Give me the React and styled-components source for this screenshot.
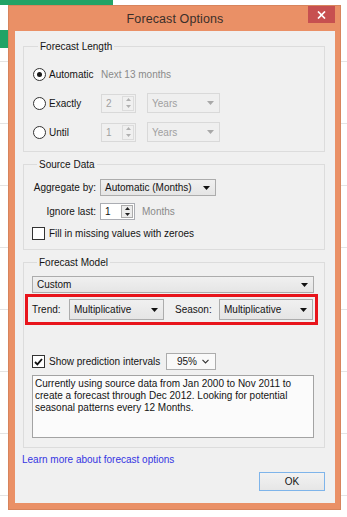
import React from 'react';
import styled, { createGlobalStyle } from 'styled-components';

const FONT = `"Liberation Sans", Arial, sans-serif`;

const Global = createGlobalStyle`
  html, body { margin: 0; padding: 0; }
  body {
    background: #fff;
    font-family: ${FONT};
    font-size: 10px;
    color: #141414;
    width: 347px;
    height: 517px;
    overflow: hidden;
  }
`;

const Desktop = styled.div`
  width: 347px;
  height: 517px;
  box-sizing: border-box;
  padding: 5px 6px 7px 8px;
  background-color: #fff;
  background-image:
    linear-gradient(#21a366, #21a366),
    linear-gradient(#21a366, #21a366),
    repeating-linear-gradient(to bottom, transparent 0 61px, #e4e4e4 61px 62px);
  background-size: 113px 5px, 8px 18px, 100% 100%;
  background-position: 0 0, 0 30px, 0 0;
  background-repeat: no-repeat;
`;

const Window = styled.div`
  width: 333px;
  height: 505px;
  box-sizing: border-box;
  background: #ea9066;
  border: 1px solid #d7845c;
  padding: 0 5px 6px 6px;
  display: flex;
  flex-direction: column;
`;

const TitleBar = styled.div`
  height: 25px;
  display: grid;
  grid-template-columns: 1fr auto 1fr;
  align-items: center;
`;

const Title = styled.div`
  grid-column: 2;
  font-size: 12.5px;
  color: #3a2f2a;
  letter-spacing: 0.1px;
`;

const CloseButton = styled.div`
  grid-column: 3;
  justify-self: end;
  align-self: start;
  width: 27px;
  height: 17px;
  background: #c75050;
  display: flex;
  align-items: center;
  justify-content: center;
`;

const Client = styled.div`
  flex: 1;
  background: #f0f0f0;
  padding: 9px 10px 12px 8px;
  display: flex;
  flex-direction: column;
`;

const Group = styled.fieldset`
  margin: 0 0 ${p => p.$mb || 0}px 0;
  border: 1px solid #dcdcdc;
  padding: ${p => p.$pad};
  min-width: 0;
`;

const Legend = styled.legend`
  padding: 0 2px;
  margin-left: 5px;
  line-height: 13px;
  font-size: 10px;
  color: #141414;
`;

const LengthGrid = styled.div`
  display: grid;
  grid-template-columns: 57px 35px 73px;
  grid-auto-rows: 20px;
  column-gap: 11px;
  row-gap: 9px;
  align-items: center;
`;

const RadioLabel = styled.label`
  display: flex;
  align-items: center;
  gap: 3px;
  white-space: nowrap;
`;

const RadioCircle = styled.span`
  flex: none;
  width: 13px;
  height: 13px;
  box-sizing: border-box;
  border-radius: 50%;
  border: 1px solid #333;
  background: #fff;
  display: flex;
  align-items: center;
  justify-content: center;
  &::after {
    content: '';
    width: 5px;
    height: 5px;
    border-radius: 50%;
    background: ${p => (p.$checked ? '#1a1a1a' : 'transparent')};
  }
`;

const Hint = styled.span`
  grid-column: ${p => p.$span || 'auto'};
  color: #8a8a8a;
`;

const SpinBox = styled.div`
  height: ${p => p.$h}px;
  width: 35px;
  box-sizing: border-box;
  border: 1px solid ${p => (p.$disabled ? '#d9d9d9' : '#abadb3')};
  background: ${p => (p.$disabled ? '#f0f0f0' : '#fff')};
  color: ${p => (p.$disabled ? '#a0a0a0' : '#141414')};
  display: flex;
  align-items: center;
  justify-content: space-between;
  padding: 1px 1px 1px 4px;
`;

const SpinButtons = styled.div`
  width: 12px;
  height: 100%;
  box-sizing: border-box;
  border: 1px solid ${p => (p.$disabled ? '#dcdcdc' : '#acacac')};
  background: ${p => (p.$disabled ? '#f0f0f0' : '#ececec')};
  display: grid;
  grid-template-rows: 1fr 1fr;
  justify-items: center;
  align-items: center;
`;

const Combo = styled.div`
  width: ${p => p.$w ? `${p.$w}px` : 'auto'};
  height: ${p => p.$h}px;
  box-sizing: border-box;
  border: 1px solid ${p => (p.$disabled ? '#d9d9d9' : '#acacac')};
  background: ${p =>
    p.$disabled ? '#efefef' : p.$light ? '#f9f9f9' : 'linear-gradient(#f0f0f0, #e5e5e5)'};
  color: ${p => (p.$disabled ? '#a0a0a0' : '#141414')};
  display: flex;
  align-items: center;
  justify-content: space-between;
  padding: 0 ${p => (p.$light ? 6 : 5)}px 0 ${p => (p.$light ? 10 : 4)}px;
`;

const SourceGrid = styled.div`
  display: grid;
  grid-template-columns: 64px auto;
  grid-template-rows: 17px 17px 13px;
  column-gap: 4px;
  row-gap: 7px;
  align-items: center;
  justify-items: start;
`;

const FieldLabel = styled.span`
  justify-self: end;
  white-space: nowrap;
`;

const Inline = styled.div`
  display: flex;
  align-items: center;
  gap: ${p => p.$gap || 0}px;
`;

const CheckLabel = styled.label`
  grid-column: ${p => p.$span || 'auto'};
  display: flex;
  align-items: center;
  gap: 4px;
  white-space: nowrap;
`;

const CheckBox = styled.span`
  flex: none;
  width: 13px;
  height: 13px;
  box-sizing: border-box;
  border: 1px solid #333;
  background: #fff;
  display: flex;
  align-items: center;
  justify-content: center;
`;

const ModelBody = styled.div`
  display: flex;
  flex-direction: column;
`;

const Highlight = styled.div`
  margin: 1px -4px 0 -7px;
  border: 3px solid #e8141b;
  padding: 2px 2px 2px 4px;
  display: flex;
  align-items: center;
`;

const InlineLabel = styled.span`
  width: ${p => p.$w}px;
  margin-left: ${p => p.$ml || 0}px;
  white-space: nowrap;
`;

const IntervalRow = styled.div`
  margin-top: 28px;
  display: grid;
  grid-template-columns: 134px 50px;
  height: 17px;
  align-items: center;
`;

const Summary = styled.div`
  margin-top: 5px;
  height: 63px;
  box-sizing: border-box;
  border: 1px solid #a3a3a3;
  background: #fbfbfb;
  padding: 2px 2px;
  line-height: 12px;
  color: #141414;
  white-space: nowrap;
`;

const Link = styled.a`
  margin: 6px 0 0 -1px;
  line-height: 12px;
  color: #3535e2;
  text-decoration: none;
  align-self: flex-start;
`;

const OkButton = styled.button`
  margin-top: 6px;
  align-self: flex-end;
  width: 66px;
  height: 19px;
  box-sizing: border-box;
  border: 1px solid #7eb4ea;
  background: linear-gradient(#f2f2f2, #e6e6e6);
  font-family: ${FONT};
  font-size: 10px;
  color: #141414;
  padding: 0;
`;

const DownArrow = ({ color = '#111' }) => (
  <svg width="7" height="4" viewBox="0 0 7 4">
    <path d="M0 0H7L3.5 4Z" fill={color} />
  </svg>
);

const Chevron = () => (
  <svg width="7" height="5" viewBox="0 0 7 5">
    <path d="M0.5 0.8L3.5 4L6.5 0.8" fill="none" stroke="#333" strokeWidth="1.1" />
  </svg>
);

const Tri = ({ up, color }) => (
  <svg width="5" height="3" viewBox="0 0 5 3">
    <path d={up ? 'M0 3H5L2.5 0Z' : 'M0 0H5L2.5 3Z'} fill={color} />
  </svg>
);

const Spin = ({ value, disabled, h }) => (
  <SpinBox $disabled={disabled} $h={h}>
    <span>{value}</span>
    <SpinButtons $disabled={disabled}>
      <Tri up color={disabled ? '#b0b0b0' : '#222'} />
      <Tri color={disabled ? '#b0b0b0' : '#222'} />
    </SpinButtons>
  </SpinBox>
);

const Dropdown = ({ label, w, h, disabled }) => (
  <Combo $w={w} $h={h} $disabled={disabled}>
    <span>{label}</span>
    <DownArrow color={disabled ? '#a8a8a8' : '#111'} />
  </Combo>
);

const Radio = ({ label, checked }) => (
  <RadioLabel>
    <RadioCircle $checked={checked} />
    <span>{label}</span>
  </RadioLabel>
);

const Check = ({ label, checked, span }) => (
  <CheckLabel $span={span}>
    <CheckBox>
      {checked && (
        <svg width="9" height="8" viewBox="0 0 9 8">
          <path d="M1 4L3.4 6.4L8 1" fill="none" stroke="#111" strokeWidth="1.8" />
        </svg>
      )}
    </CheckBox>
    <span>{label}</span>
  </CheckLabel>
);

export default function App() {
  return (
    <>
      <Global />
      <Desktop>
        <Window>
          <TitleBar>
            <Title>Forecast Options</Title>
            <CloseButton>
              <svg width="9" height="8" viewBox="0 0 9 8">
                <path d="M1 0.5L8 7.5M8 0.5L1 7.5" stroke="#fff" strokeWidth="1.7" />
              </svg>
            </CloseButton>
          </TitleBar>
          <Client>
            <Group $pad="11px 9px 9px 9px" $mb={6}>
              <Legend>Forecast Length</Legend>
              <LengthGrid>
                <Radio label="Automatic" checked />
                <Hint $span="2 / 4">Next 13 months</Hint>
                <Radio label="Exactly" />
                <Spin value="2" disabled h={19} />
                <Dropdown label="Years" w={73} h={20} disabled />
                <Radio label="Until" />
                <Spin value="1" disabled h={19} />
                <Dropdown label="Years" w={73} h={20} disabled />
              </LengthGrid>
            </Group>

            <Group $pad="8px 8px 9px 8px" $mb={6}>
              <Legend>Source Data</Legend>
              <SourceGrid>
                <FieldLabel>Aggregate by:</FieldLabel>
                <Dropdown label="Automatic (Months)" w={116} h={17} />
                <FieldLabel>Ignore last:</FieldLabel>
                <Inline $gap={7}>
                  <Spin value="1" h={17} />
                  <Hint>Months</Hint>
                </Inline>
                <Check label="Fill in missing values with zeroes" span="1 / 3" />
              </SourceGrid>
            </Group>

            <Group $pad="7px 10px 9px 8px">
              <Legend>Forecast Model</Legend>
              <ModelBody>
                <Dropdown label="Custom" h={17} />
                <Highlight>
                  <InlineLabel $w={37}>Trend:</InlineLabel>
                  <Dropdown label="Multiplicative" w={95} h={21} />
                  <InlineLabel $w={44} $ml={11}>Season:</InlineLabel>
                  <Dropdown label="Multiplicative" w={94} h={21} />
                </Highlight>
                <IntervalRow>
                  <Check label="Show prediction intervals" checked />
                  <Combo $w={50} $h={17} $light>
                    <span>95%</span>
                    <Chevron />
                  </Combo>
                </IntervalRow>
                <Summary>
                  Currently using source data from Jan 2000 to Nov 2011 to
                  <br />
                  create a forecast through Dec 2012. Looking for potential
                  <br />
                  seasonal patterns every 12 Months.
                </Summary>
              </ModelBody>
            </Group>

            <Link href="#">Learn more about forecast options</Link>
            <OkButton>OK</OkButton>
          </Client>
        </Window>
      </Desktop>
    </>
  );
}
